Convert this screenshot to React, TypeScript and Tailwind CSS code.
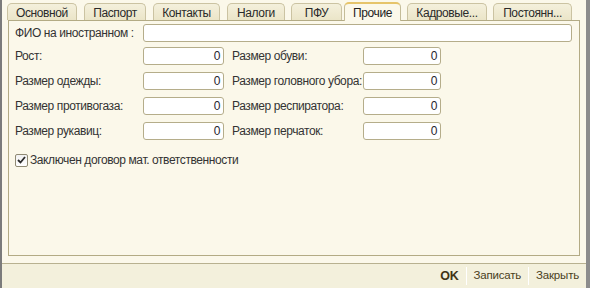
import { FC } from "react";

const tabs = [
  { label: "Основной", cls: "w-[70px]" },
  { label: "Паспорт", cls: "w-[62px] ml-[7px]" },
  { label: "Контакты", cls: "w-[67px] ml-[7px]" },
  { label: "Налоги", cls: "w-[58px] ml-[7px]" },
  { label: "ПФУ", cls: "w-[51px] ml-[6px]" },
  { label: "Прочие", cls: "w-[57px] ml-[2px]", active: true },
  { label: "Кадровые...", cls: "w-[80px] ml-[6px]" },
  { label: "Постоянн...", cls: "w-[79px] ml-[6px]" },
];

const rows = [
  ["Рост:", "Размер обуви:"],
  ["Размер одежды:", "Размер головного убора:"],
  ["Размер противогаза:", "Размер респиратора:"],
  ["Размер рукавиц:", "Размер перчаток:"],
];

const NumField: FC<{ cls: string }> = ({ cls }) => (
  <div
    className={`h-[18px] shrink-0 ${cls} bg-white border border-[#b5ad8a] rounded-[3px] flex items-center justify-end pr-[3px] text-[#1f2430]`}
  >
    0
  </div>
);

const App: FC = () => {
  return (
    <div
      className="w-[590px] h-[288px] flex flex-col bg-[#fbf8ea] border-l-2 border-l-[#7b7b7b] border-r-4 border-r-[#8c8c8c] text-[12px] tracking-[-0.4px] leading-none text-[#333]"
      style={{ fontFamily: '"Liberation Sans", Arial, sans-serif' }}
    >
      <div className="flex-1 flex flex-col pl-[6px] pr-[6px] pt-[2px] pb-[7px]">
        {/* вкладки */}
        <div className="flex items-end h-[18px] -ml-[1px]">
          {tabs.map((t) =>
            t.active ? (
              <div
                key={t.label}
                className={`${t.cls} shrink-0 h-[19px] -mb-[1px] relative z-10 rounded-t-[5px] border border-b-0 border-[#c4bc98] border-t-[#e6c46a] border-t-2 bg-[#fbf8ea] flex items-center justify-center text-[#222]`}
              >
                {t.label}
              </div>
            ) : (
              <div
                key={t.label}
                className={`${t.cls} shrink-0 h-[17px] rounded-t-[5px] border border-b-0 border-[#cbc3a2] bg-gradient-to-b from-[#f4f0dc] to-[#ebe5c8] flex items-center justify-center pt-[1px] text-[#2a2a2a]`}
              >
                {t.label}
              </div>
            )
          )}
        </div>

        {/* панель */}
        <div className="flex-1 border border-[#b3ab85] bg-[#fbf8ea] pt-[3px] pl-[6px] pr-[7px] flex flex-col">
          <div className="flex items-center h-[18px]">
            <div className="w-[128px] shrink-0 whitespace-nowrap">ФИО на иностранном :</div>
            <div className="flex-1 h-[18px] bg-white border border-[#b5ad8a] rounded-[3px]" />
          </div>

          <div className="flex flex-col gap-[7px] mt-[5px]">
            {rows.map(([l, r]) => (
              <div key={l} className="flex items-center h-[18px]">
                <div className="w-[128px] shrink-0 whitespace-nowrap">{l}</div>
                <NumField cls="w-[81px]" />
                <div className="w-[139px] shrink-0 pl-[8px] whitespace-nowrap">{r}</div>
                <NumField cls="w-[78px]" />
              </div>
            ))}
          </div>

          <label className="flex items-center mt-[13px] h-[14px]">
            <span className="w-[13px] h-[13px] border border-[#8f8a74] rounded-[2px] bg-gradient-to-b from-[#f2f2f2] to-white flex items-center justify-center">
              <svg width="9" height="8" viewBox="0 0 9 8">
                <path d="M1 4 L3.5 6.5 L8 1" fill="none" stroke="#2b2b2b" strokeWidth="1.8" />
              </svg>
            </span>
            <span className="ml-[2px]">Заключен договор мат. ответственности</span>
          </label>
        </div>
      </div>

      {/* нижняя панель */}
      <div className="h-[25px] border-t border-[#b8b190] bg-[#f3f0dc] flex items-center justify-end pr-[7px] text-[11.5px] tracking-[-0.2px] text-[#4a3f1c]">
        <span className="font-bold text-[12.5px] text-[#3f3415]">OK</span>
        <span className="w-[1px] h-[18px] bg-[#d6cfb0] mx-[7px] border-r border-r-white" />
        <span>Записать</span>
        <span className="w-[1px] h-[18px] bg-[#d6cfb0] mx-[7px] border-r border-r-white" />
        <span>Закрыть</span>
      </div>
    </div>
  );
};

export default App;
